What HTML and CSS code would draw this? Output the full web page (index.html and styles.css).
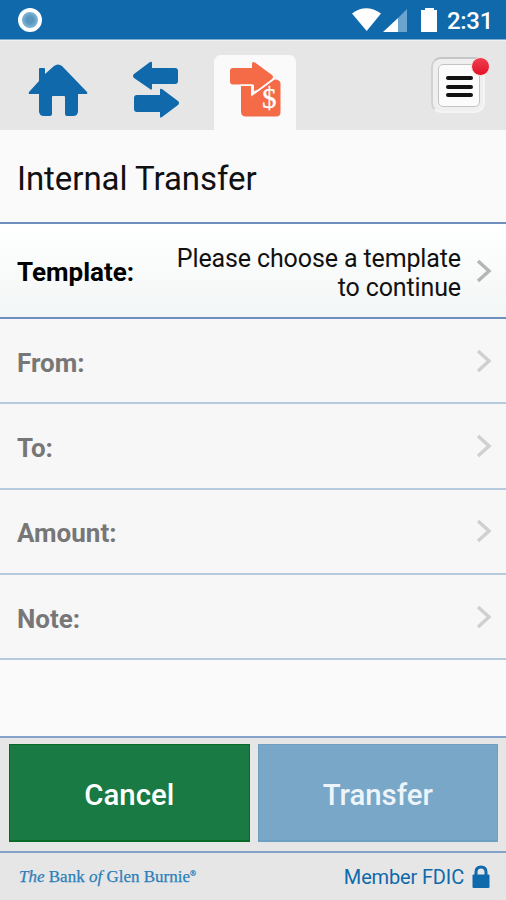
FILE: index.html
```html
<!DOCTYPE html>
<html lang="en">
<head>
<meta charset="utf-8">
<title>Internal Transfer</title>
<link rel="stylesheet" href="styles.css">
</head>
<body>
<div class="app">
  <header class="status">
    <span class="dot"></span>
    <svg class="signals" width="90" height="26" viewBox="0 0 90 26">
      <path fill="#fff" d="M0 6.500Q14 -4 29 6.500L14.700 24z"/>
      <path fill="#6aa4cf" d="M55 2V25H46V11z"/>
      <path fill="#fff" d="M46 11V25H31z"/>
      <path fill="#fff" d="M73 1h9v2h3v22H69V3h4z"/>
    </svg>
    <span class="clock">2:31</span>
  </header>
  <nav class="tabs">
    <a class="tab home"><svg width="60" height="54" viewBox="0 0 60 54">
      <path fill="#0f69ab" d="M11 17V5q0-1 1-1h4q1 0 1 1v5L26 2Q30-1 34 2L59 28q1 2-1 2h-8V47q0 5-5 5h-6q-2 0-2-2V33q0-1-1-1H25q-1 0-1 1V50q0 2-2 2H16q-5 0-5-5V30H2q-2 0-1-2z"/>
    </svg></a>
    <a class="tab swap"><svg width="46" height="58" viewBox="0 0 46 58">
      <path fill="#0f69ab" d="M1 13L17 1q2-1 2 1v5H42q3 0 3 3V20q0 3-3 3H19v4q0 3-2 1L1 17q-2-2 0-4z"/>
      <path fill="#0f69ab" d="M45 40L29 28q-2-1-2 1v5H4q-3 0-3 3v11q0 3 3 3H27v4q0 3 2 1L45 44q2-2 0-4z"/>
    </svg></a>
    <a class="tab current"><svg width="52" height="56" viewBox="0 0 52 56">
      <path fill="#f56a47" d="M11 24H21V33L24.500 32L44.500 17.500H46Q50.500 18 50.500 22V50q0 4.500-4.500 4.500H16q-5 0-5-5z"/>
      <path fill="#f56a47" d="M3 6H22V2q0-3 3-1.500L42 13q2 2 0 4L27 28.500L23.500 29V22.500H3q-3 0-3-3V9q0-3 3-3z"/>
      <path fill="none" stroke="#fafafa" stroke-width="1.500" d="M10 23.300H22V33L44.500 16.500"/>
      <path fill="#fafafa" d="M21.500 23h2.500v6.500l4-2L22 33z"/>
      <text class="dollar" x="32" y="46">$</text>
    </svg></a>
    <a class="menu"><span class="menu-face"><i></i><i></i><i></i></span><b class="badge"></b></a>
  </nav>
  <h1 class="title"><span>Internal Transfer</span></h1>
  <main class="form">
    <div class="row template">
      <span class="label">Template:</span>
      <span class="value">Please choose a template<br>to continue</span>
      <svg class="chevron" width="16" height="24" viewBox="0 0 16 24"><path d="M2 2L13 12L2 22"/></svg>
    </div>
    <div class="row"><span class="label">From:</span><svg class="chevron" width="16" height="24" viewBox="0 0 16 24"><path d="M2 2L13 12L2 22"/></svg></div>
    <div class="row"><span class="label">To:</span><svg class="chevron" width="16" height="24" viewBox="0 0 16 24"><path d="M2 2L13 12L2 22"/></svg></div>
    <div class="row"><span class="label">Amount:</span><svg class="chevron" width="16" height="24" viewBox="0 0 16 24"><path d="M2 2L13 12L2 22"/></svg></div>
    <div class="row"><span class="label">Note:</span><svg class="chevron" width="16" height="24" viewBox="0 0 16 24"><path d="M2 2L13 12L2 22"/></svg></div>
  </main>
  <div class="actions">
    <button class="cancel">Cancel</button>
    <button class="transfer">Transfer</button>
  </div>
  <footer class="footer">
    <span class="bank"><em class="the">The</em> Bank <em>of</em> Glen Burnie<sup>®</sup></span>
    <span class="fdic">Member FDIC</span>
    <svg class="lock" width="18" height="24" viewBox="0 0 18 24"><path fill="none" stroke="#0f69ab" stroke-width="3" d="M4 11V7q0-5 5-5t5 5v4"/><rect y="9.500" x=".5" width="17" height="13.500" rx="1" fill="#0f69ab"/></svg>
  </footer>
</div>
</body>
</html>
```
FILE: styles.css
```css
* { box-sizing: border-box; }
body { margin: 0; font-family: Roboto, "Liberation Sans", sans-serif; }
.app { width: 506px; height: 900px; display: flex; flex-direction: column; background: #fafafa; overflow: hidden; }
.status { height: 40px; flex: none; background: #0f69ab; border-bottom: 1px solid #7facd0; display: flex; align-items: center; padding: 0 15px 0 18px; }
.dot { width: 24px; height: 24px; border-radius: 50%; border: 4.5px solid #fff; background: radial-gradient(#5796bd 30%, #78afd2 60%); }
.signals { margin-left: auto; margin-right: 5px; }
.clock { color: #fff; font-size: 24px; font-weight: 500; line-height: 40px; padding-top: 3px; width: 44px; letter-spacing: -.3px; white-space: nowrap; }
.tabs { height: 90px; flex: none; background: #e6e6e6; display: flex; align-items: flex-start; border-top: 1px solid #f0f0f0; }
.tab { display: block; }
.tab svg { display: block; overflow: visible; }
.home { margin: 23px 0 0 28px; }
.swap { margin: 20px 0 0 45px; }
.current { width: 82px; height: 75px; margin: 14px 0 0 35px; background: #fafafa; border-radius: 7px 7px 0 0; padding: 7px 0 0 16px; }
.dollar { font: 29px "Liberation Serif", serif; fill: #fff; stroke: #fff; stroke-width: .3px; }
.menu { position: relative; width: 54px; height: 56px; margin: 16px 21px 0 auto; border-radius: 10px; border: 2px solid; border-color: #c6c6c6 #f5f5f5 #f5f5f5 #d2d2d2; background: #efefef; padding: 5px; }
.menu-face { display: flex; flex-direction: column; align-items: center; justify-content: center; gap: 4.5px; width: 42px; height: 43px; background: #fbfbfb; border: 1px solid #c4c4c4; border-radius: 5px; padding-top: 2px; }
.menu-face i { width: 27px; height: 4px; border-radius: 2px; background: #111; }
.badge { position: absolute; width: 19px; height: 19px; right: -7px; top: -2px; border-radius: 50%; border: 1px solid #f6dada; background: linear-gradient(#ee4050, #e31127); }
.title { margin: 0; height: 92px; flex: none; font-size: 33px; font-weight: 400; line-height: 98px; padding-left: 17px; letter-spacing: -.05px; color: #111; white-space: nowrap; }
.form { border-top: 2px solid #6e8fbd; }
.row { height: 85.300px; display: flex; align-items: center; padding: 0 14px 0 17px; background: #f7f7f7; border-bottom: 2px solid #b5cadd; }
.row.template { height: 95px; background: linear-gradient(#fff, #f3f6f6); border-bottom-color: #6e8fbd; }
.label { font-size: 26px; font-weight: 700; color: #777; padding-top: 4px; white-space: nowrap; }
.template .label { color: #000; padding-top: 3px; }
.value { margin-left: auto; text-align: right; font-size: 25px; line-height: 29px; color: #111; padding-top: 4px; margin-right: 15px; letter-spacing: -.12px; white-space: nowrap; }
.chevron { flex: none; fill: none; stroke: #d0d0d0; stroke-width: 3.5; }
.row:not(.template) .chevron { margin-left: auto; }
.template .chevron { stroke: #b5b5b5; }
.actions { margin-top: auto; flex: none; height: 117px; background: #e6e6e6; border: 2px solid #84a1c9; border-width: 2px 0; display: flex; gap: 8px; padding: 6px 8px 9px 9px; }
.actions button { flex: 1; border: 1px solid #086a29; border-bottom-width: 2px; background: #197b43; color: #fff; font: 500 29.4px Roboto, sans-serif; padding: 5px 0 0; margin: 0; }
.actions .transfer { background: #79a7c7; border-color: #6f9fc3; color: #edf4fa; }
.footer { height: 47px; flex: none; background: #e6e6e6; display: flex; align-items: center; padding: 0 16px 0 19px; color: #0f69ab; }
.bank { font: 17px "Liberation Serif", serif; color: #2a80bb; -webkit-text-stroke: .25px #2a80bb; white-space: nowrap; }
.bank sup { font-size: 8px; line-height: 0; vertical-align: 6px; }
.fdic { margin-left: auto; margin-right: 8px; font-size: 20px; letter-spacing: -.15px; white-space: nowrap; }
```
